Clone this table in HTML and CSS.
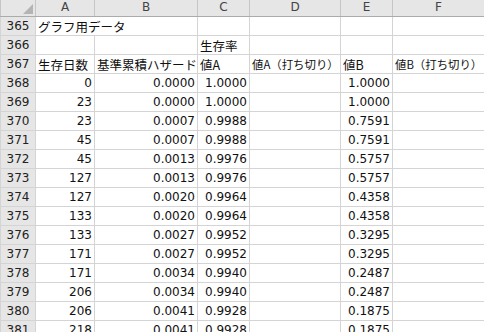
FILE: index.html
```html
<!DOCTYPE html>
<html lang="ja">
<head>
<meta charset="utf-8">
<link rel="stylesheet" href="styles.css">
</head>
<body>
<table class="sheet">
  <colgroup>
    <col class="c-rh"><col class="c-a"><col class="c-b"><col class="c-c"><col class="c-d"><col class="c-e"><col class="c-f">
  </colgroup>
  <thead>
    <tr class="hdr">
      <th class="corner"><span class="tri"></span></th>
      <th>A</th><th>B</th><th>C</th><th>D</th><th>E</th><th>F</th>
    </tr>
  </thead>
  <tbody>
    <tr><th class="rn">365</th><td class="txt" colspan="2">グラフ用データ</td><td></td><td></td><td></td><td></td></tr>
    <tr><th class="rn">366</th><td></td><td></td><td class="txt">生存率</td><td></td><td></td><td></td></tr>
    <tr><th class="rn">367</th><td class="txt">生存日数</td><td class="txt">基準累積ハザード</td><td class="txt">値A</td><td class="txt prop">値A（打ち切り）</td><td class="txt">値B</td><td class="txt prop">値B（打ち切り）</td></tr>
    <tr><th class="rn">368</th><td class="num">0</td><td class="num">0.0000</td><td class="num">1.0000</td><td></td><td class="num">1.0000</td><td></td></tr>
    <tr><th class="rn">369</th><td class="num">23</td><td class="num">0.0000</td><td class="num">1.0000</td><td></td><td class="num">1.0000</td><td></td></tr>
    <tr><th class="rn">370</th><td class="num">23</td><td class="num">0.0007</td><td class="num">0.9988</td><td></td><td class="num">0.7591</td><td></td></tr>
    <tr><th class="rn">371</th><td class="num">45</td><td class="num">0.0007</td><td class="num">0.9988</td><td></td><td class="num">0.7591</td><td></td></tr>
    <tr><th class="rn">372</th><td class="num">45</td><td class="num">0.0013</td><td class="num">0.9976</td><td></td><td class="num">0.5757</td><td></td></tr>
    <tr><th class="rn">373</th><td class="num">127</td><td class="num">0.0013</td><td class="num">0.9976</td><td></td><td class="num">0.5757</td><td></td></tr>
    <tr><th class="rn">374</th><td class="num">127</td><td class="num">0.0020</td><td class="num">0.9964</td><td></td><td class="num">0.4358</td><td></td></tr>
    <tr><th class="rn">375</th><td class="num">133</td><td class="num">0.0020</td><td class="num">0.9964</td><td></td><td class="num">0.4358</td><td></td></tr>
    <tr><th class="rn">376</th><td class="num">133</td><td class="num">0.0027</td><td class="num">0.9952</td><td></td><td class="num">0.3295</td><td></td></tr>
    <tr><th class="rn">377</th><td class="num">171</td><td class="num">0.0027</td><td class="num">0.9952</td><td></td><td class="num">0.3295</td><td></td></tr>
    <tr><th class="rn">378</th><td class="num">171</td><td class="num">0.0034</td><td class="num">0.9940</td><td></td><td class="num">0.2487</td><td></td></tr>
    <tr><th class="rn">379</th><td class="num">206</td><td class="num">0.0034</td><td class="num">0.9940</td><td></td><td class="num">0.2487</td><td></td></tr>
    <tr><th class="rn">380</th><td class="num">206</td><td class="num">0.0041</td><td class="num">0.9928</td><td></td><td class="num">0.1875</td><td></td></tr>
    <tr><th class="rn">381</th><td class="num">218</td><td class="num">0.0041</td><td class="num">0.9928</td><td></td><td class="num">0.1875</td><td></td></tr>
  </tbody>
</table>
</body>
</html>
```

FILE: styles.css
```css
html, body {
  margin: 0;
  padding: 0;
  background: #ffffff;
  overflow: hidden;
}
.sheet {
  border-collapse: collapse;
  table-layout: fixed;
  width: 484px;
  font-family: "DejaVu Sans", "Noto Sans CJK JP", sans-serif;
  font-size: 12px;
  color: #111;
}
.c-rh { width: 35px; }
.c-a { width: 59px; }
.c-b { width: 103px; }
.c-c { width: 52px; }
.c-d { width: 91px; }
.c-e { width: 52px; }
.c-f { width: 92px; }
.sheet th, .sheet td {
  padding: 1px 2px 0 2px;
  height: 18px;
  line-height: 17px;
  border: 1px solid #d4d4d4;
  white-space: nowrap;
  overflow: visible;
  font-weight: normal;
  box-sizing: border-box;
}
.sheet tbody th, .sheet tbody td {
  height: 19px;
}
.hdr th {
  height: 16px;
  line-height: 15px;
  padding: 0 2px;
  background: #e6e6e6;
  color: #444;
  text-align: center;
  border-top: none;
  border-color: #c6c6c6;
  border-bottom: 1px solid #ababab;
}
.corner {
  position: relative;
  border-left: none;
}
.tri {
  position: absolute;
  right: 2px;
  bottom: 2px;
  width: 0;
  height: 0;
  border-left: 10px solid transparent;
  border-bottom: 10px solid #b4b4b4;
}
.rn {
  background: #e6e6e6;
  color: #222;
  text-align: center;
  border-left: none;
  border-color: #c6c6c6;
  border-right: 1px solid #ababab;
}
.txt {
  text-align: left;
  font-family: "Noto Sans CJK JP", sans-serif;
  font-size: 12.5px;
}
.prop {
  font-size: 11.4px;
}
.num {
  text-align: right;
}
```
